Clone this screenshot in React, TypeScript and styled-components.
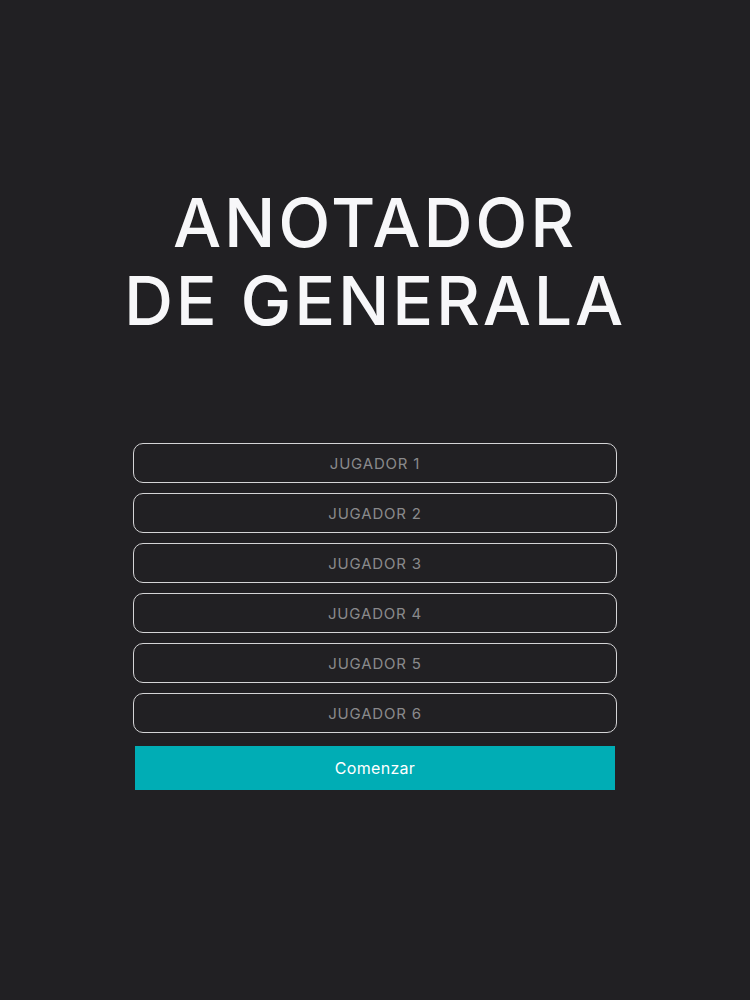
import React from 'react';
import styled, { createGlobalStyle } from 'styled-components';

const GlobalStyle = createGlobalStyle`
      html, body {
            margin: 0;
            padding: 0;
            background-color: #212023;
      }
      body {
            font-family: "Inter", "Liberation Sans", sans-serif;
      }
`;

const Page = styled.div`
      min-height: 1000px;
      display: flex;
      flex-direction: column;
      align-items: center;
      padding-top: 183px;
      box-sizing: border-box;
`;

const Title = styled.h1`
      margin: 0 0 104px;
      color: #f7f7f9;
      font-size: 68px;
      font-weight: 500;
      line-height: 78px;
      text-align: center;
      letter-spacing: 2.8px;
`;

const Form = styled.form`
      width: 484px;
      display: flex;
      flex-direction: column;
      align-items: center;
      gap: 10px;
`;

const PlayerInput = styled.input`
      width: 100%;
      height: 40px;
      box-sizing: border-box;
      background: transparent;
      border: 1.5px solid #d4d4d6;
      border-radius: 10px;
      color: #e8e8e8;
      font-family: inherit;
      font-size: 15px;
      letter-spacing: 0.8px;
      text-align: center;
      outline: none;

      &::placeholder {
            color: #8a8a8c;
      }
`;

const StartButton = styled.button`
      width: 480px;
      height: 44px;
      margin-top: 3px;
      border: none;
      background-color: #00adb5;
      color: #ffffff;
      font-family: inherit;
      font-size: 16px;
      letter-spacing: 0.3px;
      cursor: pointer;
`;

const players = [1, 2, 3, 4, 5, 6];

const App: React.FC = () => {
      return (
            <>
                  <GlobalStyle />
                  <Page>
                        <Title>
                              ANOTADOR
                              <br />
                              DE GENERALA
                        </Title>
                        <Form onSubmit={(e) => e.preventDefault()}>
                              {players.map((n) => (
                                    <PlayerInput key={n} placeholder={`JUGADOR ${n}`} />
                              ))}
                              <StartButton type="submit">Comenzar</StartButton>
                        </Form>
                  </Page>
            </>
      );
};

export default App;
